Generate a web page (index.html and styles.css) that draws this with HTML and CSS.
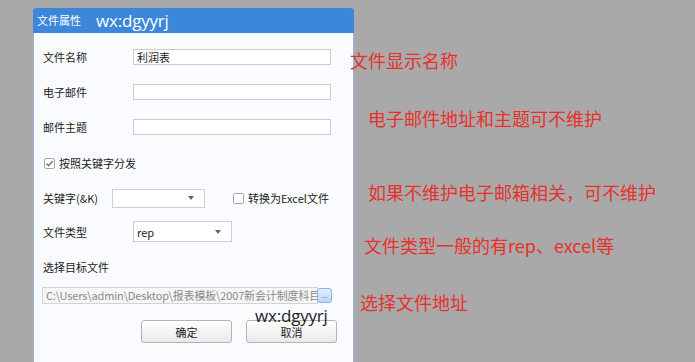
FILE: index.html
```html
<!DOCTYPE html>
<html lang="zh-CN">
<head>
    <meta charset="UTF-8">
    <title>文件属性</title>
    <link rel="stylesheet" href="styles.css">
</head>
<body>
    <div class="desk">
        <div class="dialog">
            <div class="dialog-header">
                <span class="dialog-title">文件属性</span>
                <span class="mark mark-head">wx:dgyyrj</span>
            </div>

            <div class="dialog-body">
                <div class="row">
                    <label class="label">文件名称</label>
                    <div class="input">利润表</div>
                </div>
                <div class="row">
                    <label class="label">电子邮件</label>
                    <div class="input"></div>
                </div>
                <div class="row">
                    <label class="label">邮件主题</label>
                    <div class="input"></div>
                </div>

                <div class="row row-check">
                    <span class="check checked">
                        <svg width="9" height="9" viewBox="0 0 9 9"><path d="M1.5 4.6 L3.6 6.7 L7.6 2.2" fill="none" stroke="#555" stroke-width="1.2"/></svg>
                    </span>
                    <span class="check-text">按照关键字分发</span>
                </div>

                <div class="row row-key">
                    <label class="label label-short">关键字(&amp;K)</label>
                    <div class="combo combo-key">
                        <span class="combo-value"></span>
                        <span class="arrow"></span>
                    </div>
                    <span class="check check-excel"></span>
                    <span class="check-text">转换为Excel文件</span>
                </div>

                <div class="row">
                    <label class="label">文件类型</label>
                    <div class="combo combo-type">
                        <span class="combo-value">rep</span>
                        <span class="arrow"></span>
                    </div>
                </div>

                <div class="row">
                    <label class="label">选择目标文件</label>
                </div>

                <div class="row row-path">
                    <div class="path">C:\Users\admin\Desktop\报表模板\2007新会计制度科目</div>
                    <button class="browse">...</button>
                </div>

                <div class="actions">
                    <button class="btn">确定</button>
                    <button class="btn">取消</button>
                    <span class="mark mark-foot">wx:dgyyrj</span>
                </div>
            </div>
        </div>

        <div class="notes">
            <p class="note note-1">文件显示名称</p>
            <p class="note note-2">电子邮件地址和主题可不维护</p>
            <p class="note note-3">如果不维护电子邮箱相关，可不维护</p>
            <p class="note note-4">文件类型一般的有rep、excel等</p>
            <p class="note note-5">选择文件地址</p>
        </div>
    </div>
</body>
</html>
```

FILE: styles.css
```css
* {
    margin: 0;
    padding: 0;
    box-sizing: border-box;
    font-family: "Noto Sans CJK SC", "Noto Sans", sans-serif;
}

:root {
    --desk-gray: #a9a9a9;
    --header-blue: #3c87da;
    --panel: #f9fbff;
    --line: #c9ced8;
    --text: #222;
    --note-red: #e8302c;
}

body {
    background-color: var(--desk-gray);
    color: var(--text);
    height: 362px;
    overflow: hidden;
}

.desk {
    display: flex;
    padding: 8px 0 0 33px;
}

/* dialog window */
.dialog {
    width: 321px;
    height: 354px;
    flex-shrink: 0;
    background-color: var(--panel);
    border: 1px solid #9fb3d6;
    border-top: none;
    border-bottom: none;
    border-radius: 3px 3px 0 0;
}

.dialog-header {
    height: 25px;
    background-color: var(--header-blue);
    display: flex;
    align-items: center;
    padding-left: 4px;
    border-radius: 3px 3px 0 0;
    margin: 0 -1px;
}

.dialog-title {
    color: #fff;
    font-size: 11px;
    line-height: 1;
}

.mark {
    font-family: "Open Sans", "Noto Sans", sans-serif;
    font-size: 17px;
    line-height: 1;
    letter-spacing: -0.2px;
}

.mark-head {
    color: #fff;
    margin-left: 15px;
    margin-top: -1px;
}

.dialog-body {
    padding: 6px 0 0 9px;
}

.row {
    display: flex;
    align-items: center;
    height: 35px;
    font-size: 11px;
}

.label {
    width: 90px;
    flex-shrink: 0;
    font-size: 11px;
}

.label-short {
    width: 69px;
}

.input {
    width: 198px;
    height: 16px;
    border: 1px solid var(--line);
    background-color: #fff;
    font-size: 11px;
    line-height: 14px;
    padding-left: 3px;
}

/* checkboxes */
.row-check {
    height: 38px;
    padding-left: 1px;
}

.check {
    width: 11px;
    height: 11px;
    border: 1px solid #a6a6a6;
    border-radius: 2px;
    background-color: #fff;
    display: inline-flex;
    align-items: center;
    justify-content: center;
    flex-shrink: 0;
}

.check-text {
    margin-left: 4px;
    font-size: 11px;
}

.check-excel {
    margin-left: 28px;
}

.row-key {
    height: 32px;
}

/* combo boxes */
.combo {
    display: flex;
    align-items: center;
    justify-content: space-between;
    border: 1px solid var(--line);
    background-color: #fff;
    padding: 0 10px 0 3px;
}

.combo-key {
    width: 93px;
    height: 19px;
}

.combo-type {
    width: 99px;
    height: 21px;
}

.combo-value {
    font-size: 11px;
}

.arrow {
    width: 0;
    height: 0;
    border-left: 3px solid transparent;
    border-right: 3px solid transparent;
    border-top: 4px solid #666;
}

/* path picker */
.row-path {
    height: 22px;
    margin-left: -1px;
}

.path {
    width: 276px;
    height: 17px;
    border: 1px solid #cfd3da;
    background-color: #f6f6f6;
    color: #8a8a8a;
    font-size: 11px;
    line-height: 15px;
    padding-left: 3px;
    letter-spacing: -0.15px;
    white-space: nowrap;
    overflow: hidden;
}

.browse {
    width: 15px;
    height: 15px;
    margin-left: -1px;
    border: 1px solid #8fb2e0;
    border-radius: 3px;
    background: linear-gradient(#e3efff, #bcd5f5);
    color: #3a6fb5;
    font-size: 7px;
    line-height: 7px;
    padding: 0;
    cursor: pointer;
}

/* buttons */
.actions {
    position: relative;
    display: flex;
    gap: 14px;
    padding-left: 98px;
    margin-top: 14px;
}

.btn {
    width: 91px;
    height: 23px;
    border: 1px solid #b4b4b4;
    border-radius: 3px;
    background: linear-gradient(#ffffff, #e9e9e9);
    font-size: 11px;
    color: var(--text);
    cursor: pointer;
}

.mark-foot {
    position: absolute;
    left: 212px;
    top: -13px;
    color: #222;
}

/* red annotations */
.notes {
    display: flex;
    flex-direction: column;
    align-items: flex-start;
    padding-top: 40px;
}

.note {
    color: var(--note-red);
    font-size: 18px;
    line-height: 24px;
    white-space: nowrap;
}

.note-1 {
    margin-left: -4px;
}

.note-2 {
    margin-left: 14px;
    margin-top: 34px;
}

.note-3 {
    margin-left: 14px;
    margin-top: 50px;
}

.note-4 {
    margin-left: 10px;
    margin-top: 29px;
}

.note-5 {
    margin-left: 6px;
    margin-top: 33px;
}
```
